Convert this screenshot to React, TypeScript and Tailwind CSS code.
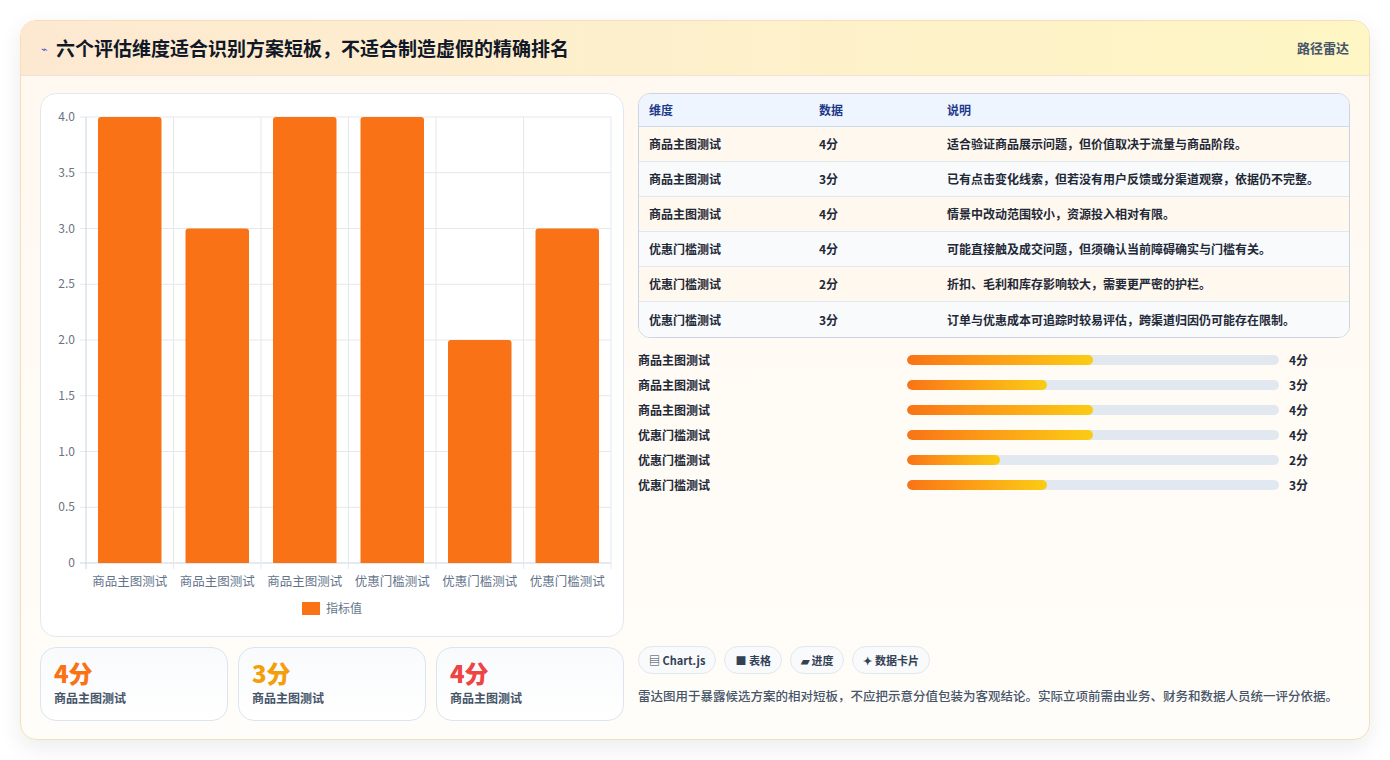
import React from "react";

const rows = [
  ["商品主图测试", 4, "适合验证商品展示问题，但价值取决于流量与商品阶段。"],
  ["商品主图测试", 3, "已有点击变化线索，但若没有用户反馈或分渠道观察，依据仍不完整。"],
  ["商品主图测试", 4, "情景中改动范围较小，资源投入相对有限。"],
  ["优惠门槛测试", 4, "可能直接触及成交问题，但须确认当前障碍确实与门槛有关。"],
  ["优惠门槛测试", 2, "折扣、毛利和库存影响较大，需要更严密的护栏。"],
  ["优惠门槛测试", 3, "订单与优惠成本可追踪时较易评估，跨渠道归因仍可能存在限制。"],
] as const;

function Chart() {
  const L = 45, R = 570, T = 23, B = 469;
  const h = B - T;
  const cw = (R - L) / 6;
  const ticks = [0, 0.5, 1, 1.5, 2, 2.5, 3, 3.5, 4];
  return (
    <svg width="583" height="543" className="block">
      {ticks.map((t) => {
        const y = B - (t / 4) * h;
        return (
          <g key={t}>
            <line x1={L - 6} x2={R} y1={y} y2={y} stroke={t === 0 ? "#cbd5e1" : "#e5e7eb"} strokeWidth="1" />
            <text x={L - 11} y={y + 4} textAnchor="end" fontSize="12" fill="#6b7280">{t === 0 ? "0" : t.toFixed(1)}</text>
          </g>
        );
      })}
      {Array.from({ length: 7 }).map((_, i) => (
        <line key={i} x1={L + i * cw} x2={L + i * cw} y1={T} y2={B + 6} stroke={i === 0 ? "#cbd5e1" : "#e5e7eb"} />
      ))}
      {rows.map((r, i) => {
        const v = r[1] as number;
        const bh = (v / 4) * h;
        return (
          <g key={i}>
            <path d={`M${L + i * cw + 12} ${B} V${B - bh + 3} q0 -3 3 -3 H${L + i * cw + cw - 15} q3 0 3 3 V${B} Z`} fill="#f97316" />
            <text x={L + i * cw + cw / 2} y={492} textAnchor="middle" fontSize="12.5" fill="#64748b">{r[0]}</text>
          </g>
        );
      })}
      <rect x="261" y="508" width="18" height="13" fill="#f97316" />
      <text x="285" y="519" fontSize="12" fill="#64748b">指标值</text>
    </svg>
  );
}

export default function App() {
  const font = { fontFamily: '"Noto Sans CJK SC", "Noto Sans", sans-serif' };
  return (
    <div className="w-[1390px] h-[760px] bg-white p-5" style={font}>
      <div className="h-[720px] rounded-2xl border border-[#f5dfb8] shadow-[0_8px_24px_rgba(0,0,0,0.08)] overflow-hidden flex flex-col bg-gradient-to-b from-[#fff8f0] to-[#fffdf9]">
        <div className="h-[55px] shrink-0 flex items-center justify-between px-5 bg-gradient-to-r from-[#fde9d2] to-[#fef6c4] border-b border-[#efe4d4]">
          <div className="flex items-center gap-2">
            <span className="text-[11px] text-[#3b5bdb]">⌁</span>
            <span className="text-[19px] font-bold text-[#111827]">六个评估维度适合识别方案短板，不适合制造虚假的精确排名</span>
          </div>
          <span className="text-[13px] font-semibold text-[#475569]">路径雷达</span>
        </div>
        <div className="flex gap-[14px] px-[19px] pt-[17px]">
          <div className="w-[584px] flex flex-col gap-[10px]">
            <div className="h-[544px] bg-white rounded-2xl border border-[#e2e8f0]">
              <Chart />
            </div>
            <div className="grid grid-cols-3 gap-[10px]">
              {[["4分", "text-[#f97316]"], ["3分", "text-[#f59e0b]"], ["4分", "text-[#ef4444]"]].map(([v, c], i) => (
                <div key={i} className="h-[74px] rounded-2xl border border-[#dbe5f1] bg-gradient-to-b from-[#f8fafc] to-white px-[13px] pt-[10px]">
                  <div className={`text-[24px] font-extrabold leading-[30px] ${c}`}>{v}</div>
                  <div className="text-[12px] font-semibold text-[#475569] mt-[1px]">商品主图测试</div>
                </div>
              ))}
            </div>
          </div>
          <div className="flex-1 flex flex-col">
            <div className="rounded-xl border border-[#cbd5e1] overflow-hidden">
              <div className="h-[33px] flex items-center bg-[#eef5ff] border-b border-[#cfdbe9] text-[12px] font-bold text-[#1e3a8a] px-[10px]">
                <div className="w-[170px]">维度</div>
                <div className="w-[128px]">数据</div>
                <div>说明</div>
              </div>
              {rows.map((r, i) => (
                <div key={i} className={`h-[35px] flex items-center px-[10px] text-[12px] font-semibold text-[#1f2937] ${i % 2 === 0 ? "bg-[#fff8ee]" : "bg-[#f8fafc]"} ${i < 5 ? "border-b border-[#e2e8f0]" : ""}`}>
                  <div className="w-[170px]">{r[0]}</div>
                  <div className="w-[128px]">{r[1]}分</div>
                  <div>{r[2]}</div>
                </div>
              ))}
            </div>
            <div className="mt-[9px] flex flex-col">
              {rows.map((r, i) => (
                <div key={i} className="h-[25px] flex items-center text-[12px] font-semibold text-[#1f2937]">
                  <div className="w-[269px]">{r[0]}</div>
                  <div className="w-[372px] h-[10px] rounded-full bg-[#e2e8f0] overflow-hidden">
                    <div className="h-full rounded-full bg-gradient-to-r from-[#f97316] to-[#facc15]" style={{ width: `${((r[1] as number) / 8) * 100}%` }} />
                  </div>
                  <div className="ml-[10px]">{r[1]}分</div>
                </div>
              ))}
            </div>
            <div className="mt-[149px] flex gap-[8px]">
              {["▤ Chart.js", "■ 表格", "▰ 进度", "✦ 数据卡片"].map((t) => (
                <span key={t} className="h-[28px] px-[10px] flex items-center rounded-full border border-[#e2e8f0] bg-[#f8fafc] text-[11px] font-semibold text-[#334155]">{t}</span>
              ))}
            </div>
            <p className="mt-[11px] text-[12.5px] leading-[22px] text-[#475569] font-medium">雷达图用于暴露候选方案的相对短板，不应把示意分值包装为客观结论。实际立项前需由业务、财务和数据人员统一评分依据。</p>
          </div>
        </div>
      </div>
    </div>
  );
}
